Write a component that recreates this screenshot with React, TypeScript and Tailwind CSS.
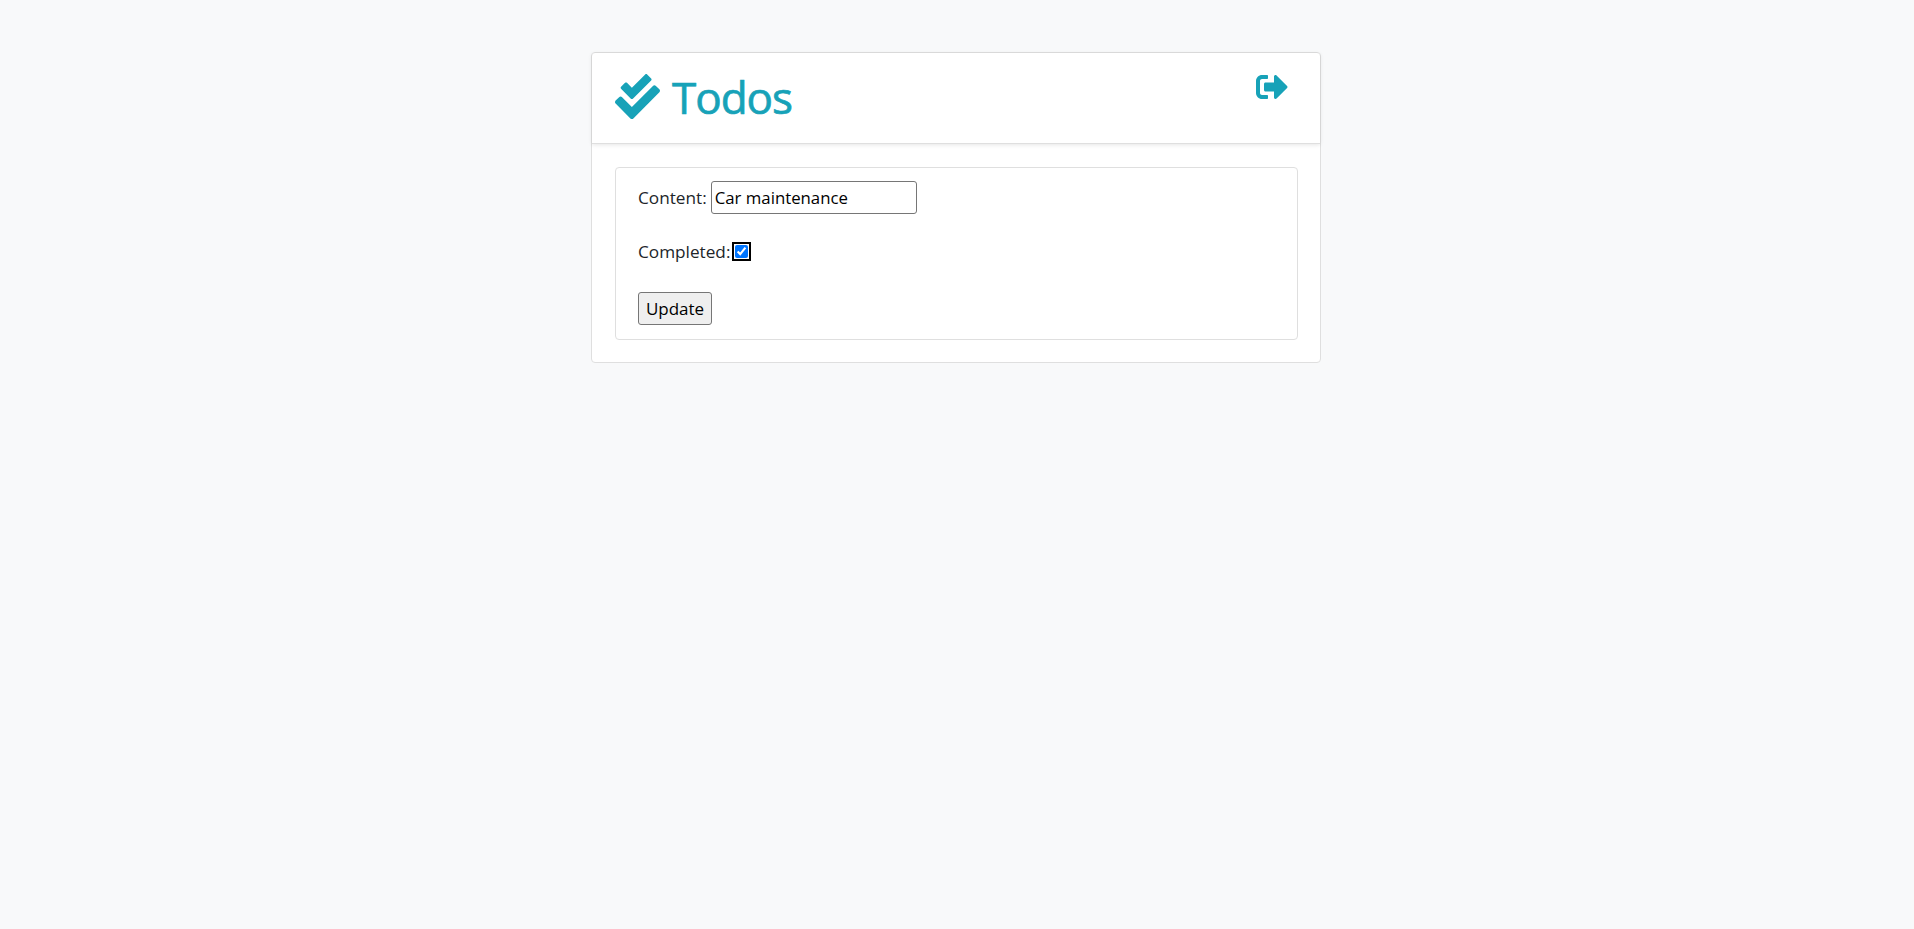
import { FaCheckDouble, FaSignOutAlt } from "react-icons/fa";

export default function App() {
  return (
    <div className="min-h-[929px] bg-[#f8f9fa] pr-[2px] pt-[52px] font-['Open_Sans','Noto_Sans',sans-serif] text-[17.2px] text-[#212529]">
      <div className="mx-auto w-[730px] rounded border border-[#dfdfdf] bg-white">
        {/* Header */}
        <div className="flex h-[91px] justify-between border-b border-[#dfdfdf] pb-[3px] pl-[23px] pr-[32px] shadow-[0_1px_4px_rgba(0,0,0,0.1)]">
          <div className="flex items-center gap-3 text-[#17a2b8]">
            <FaCheckDouble className="h-[45px] w-[45px]" />
            <h1 className="text-[44px] leading-none tracking-[-1px] [-webkit-text-stroke:0.7px_#17a2b8]">Todos</h1>
          </div>
          <a className="pt-[18px] text-[#17a2b8]" href="#">
            <FaSignOutAlt className="h-8 w-8" />
          </a>
        </div>

        {/* Form */}
        <div className="pb-[22px] pl-[23px] pr-[22px] pt-[23px]">
          <div className="flex h-[173px] flex-col items-start rounded border border-[#dfdfdf] px-[22px] pt-[13px]">
            <label className="flex items-center gap-1">
              Content:
              <input
                className="h-[33px] w-[206px] rounded-[3px] border border-[#767676] px-[3px] text-[16.8px] text-black"
                defaultValue="Car maintenance"
              />
            </label>
            <label className="mt-[27px] flex h-[21px] items-center">
              Completed:
              <input
                type="checkbox"
                defaultChecked
                className="ml-[5px] h-[13px] w-[13px] rounded-[3px] outline-2 outline-offset-1 outline-black"
              />
            </label>
            <button className="mt-[30px] h-[33px] w-[74px] rounded-[3px] border border-[#767676] bg-[#efefef] text-[17px] text-black">
              Update
            </button>
          </div>
        </div>
      </div>
    </div>
  );
}
